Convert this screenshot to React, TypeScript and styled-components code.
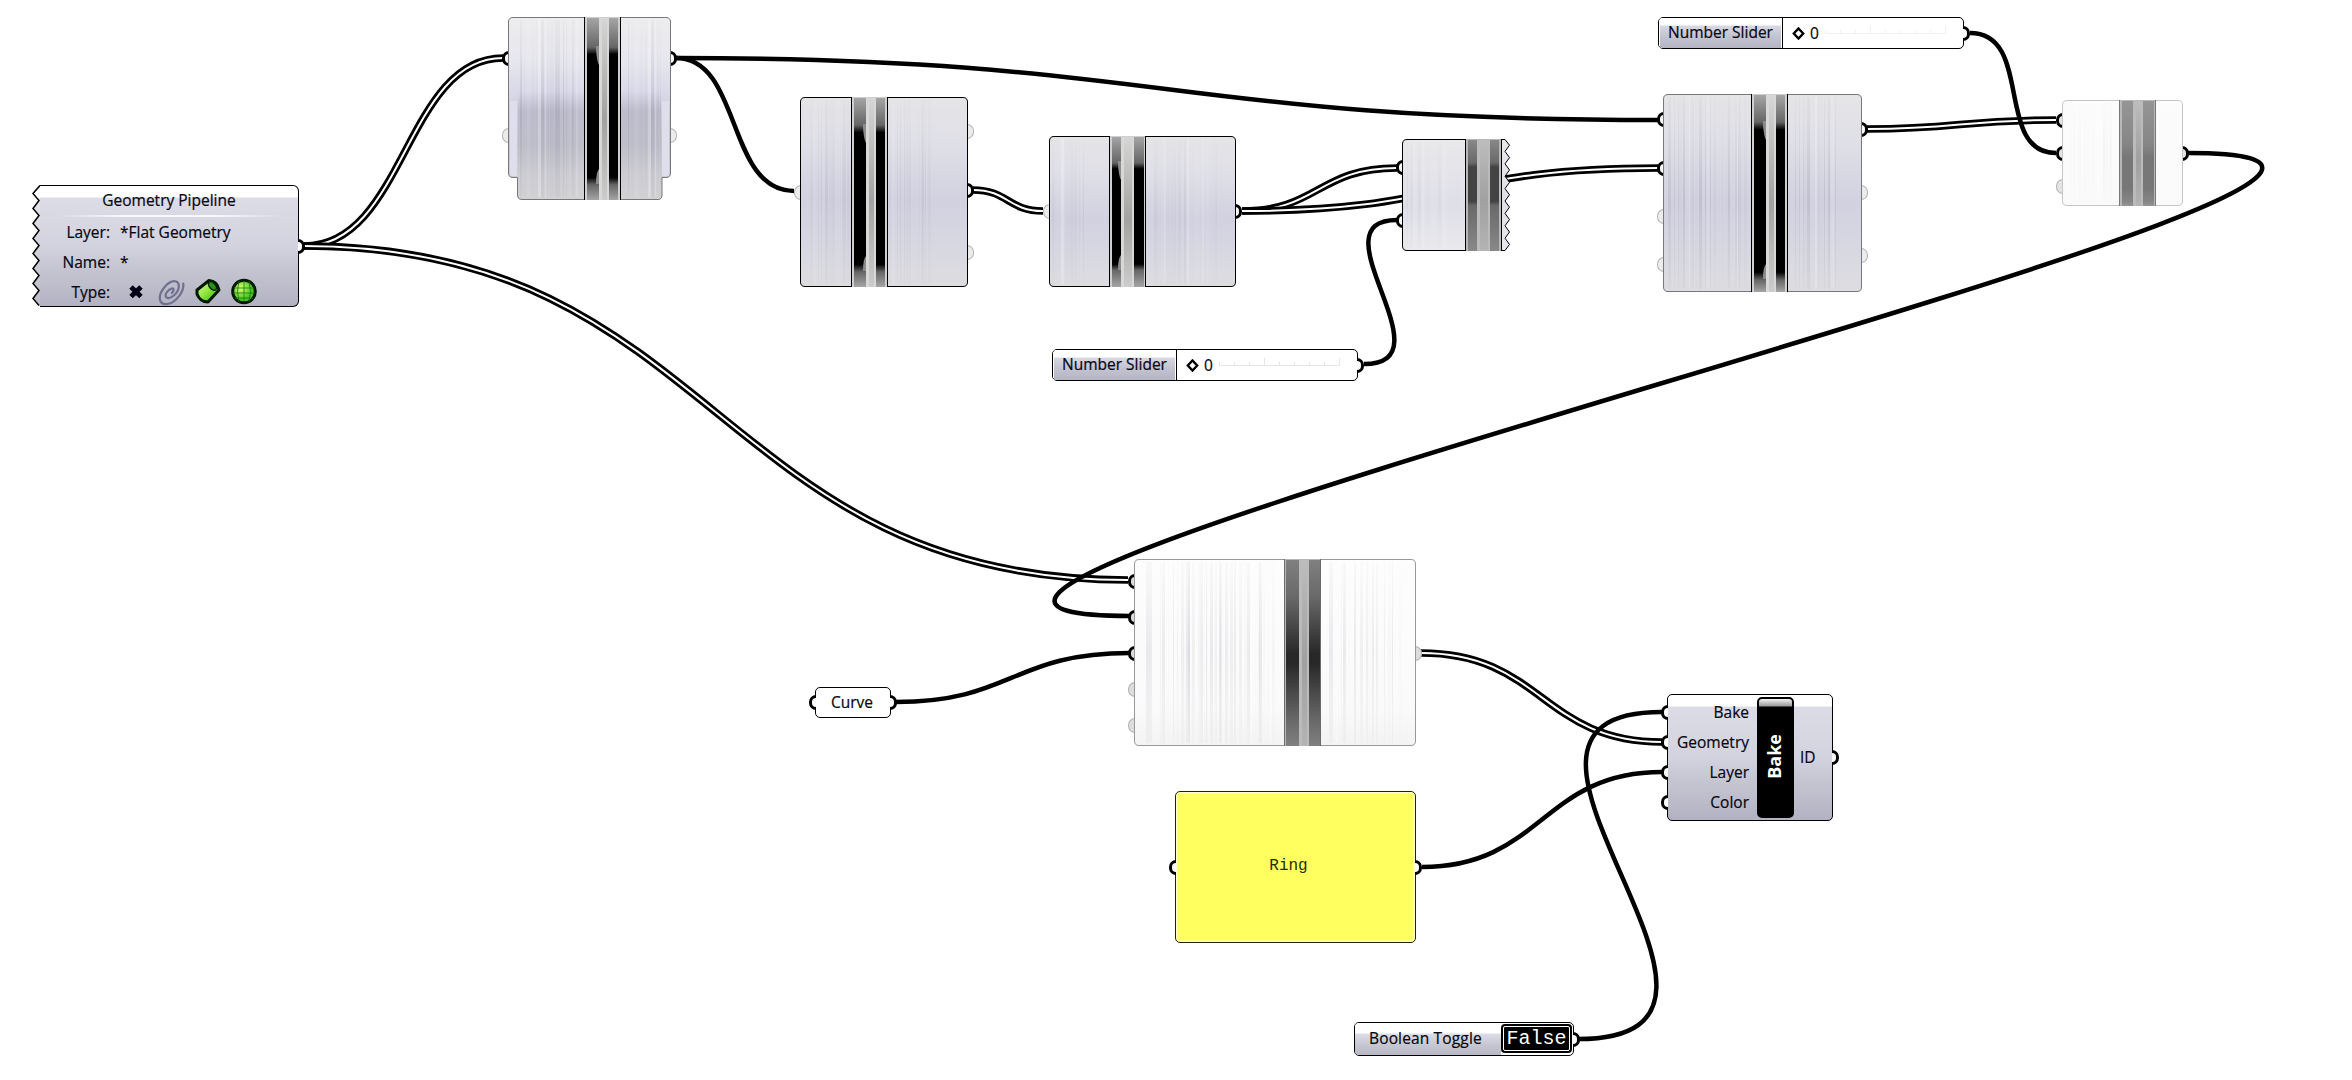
import { ReactNode } from "react";
import styled, { createGlobalStyle } from "styled-components";

const GlobalStyle = createGlobalStyle`
  * {
    box-sizing: border-box;
  }
  body {
    margin: 0;
    background: #ffffff;
    overflow: hidden;
  }
`;

const Canvas = styled.main`
  position: relative;
  width: 2352px;
  height: 1080px;
  overflow: hidden;
  background: #ffffff;
  color: #06060f;
  font-family: "Open Sans", "Noto Sans", sans-serif;
  font-size: 15.5px;
  line-height: 30px;
  -webkit-text-stroke: 0.2px #06060f;
  white-space: nowrap;
`;

const Wires = styled.svg`
  position: absolute;
  inset: 0;
`;

interface IBox {
  $x: number;
  $y: number;
  $w: number;
  $h: number;
}

const Placed = styled.div<IBox>`
  position: absolute;
  left: ${props => props.$x}px;
  top: ${props => props.$y}px;
  width: ${props => props.$w}px;
  height: ${props => props.$h}px;
`;

const Port = styled.span<{ $side: "left" | "right"; $at: number; $ghost?: boolean; $fill?: string }>`
  position: absolute;
  ${props => props.$side}: -6px;
  top: ${props => props.$at - 7.5}px;
  width: 7px;
  height: 15px;
  background: ${props => props.$fill ?? (props.$ghost ? "#ececec" : "#fafafa")};
  border: ${props => props.$ghost ? "1px solid #b4b4b4" : "3px solid #000"};
  border-radius: ${props => props.$side === "left" ? "8px 0 0 8px" : "0 8px 8px 0"};
  border-${props => props.$side === "left" ? "right" : "left"}: none;
`;

const Capsule = styled.div`
  display: flex;
  width: 100%;
  height: 100%;
  border: 1.5px solid #000;
  border-radius: 5px;
  overflow: hidden;
  background: #fff;
`;

const silver = "linear-gradient(#fff 0 11px, #dcdce7 12px, #d3d3df 50%, #c8c8d4 65%, #b2b2c2 100%)";

/* Geometry pipeline */

const PipelineNode = styled(Placed)`
  display: flex;
`;

const PipelineBody = styled.div`
  display: flex;
  flex-direction: column;
  flex: 1;
  border: 1px solid #000;
  border-bottom-width: 1.5px;
  border-right-width: 1.5px;
  border-left: none;
  border-radius: 0 6px 6px 0;
  background: ${silver};
`;

const PipelineTitle = styled.div`
  height: 29px;
  line-height: 29px;
  text-align: center;
`;

const Rule = styled.div`
  height: 2px;
  margin: 0 16px;
  background: linear-gradient(90deg, transparent, #f8f8ff 30%, #f8f8ff 70%, transparent);
`;

const Fields = styled.dl`
  display: grid;
  grid-template-columns: 70px 1fr;
  grid-template-rows: 30px 30px 29px;
  column-gap: 10px;
  margin: 0;
  line-height: 30px;
  dt {
    text-align: right;
  }
  dd {
    margin: 0;
  }
  svg {
    display: block;
    margin-left: 1px;
  }
`;

/* Slider, toggle, panel, bake */

const SliderLabel = styled.div`
  width: 124px;
  border-right: 1.5px solid #000;
  padding: 0 1px;
  background: linear-gradient(#fff 0 7px, #d8d8e3 8px, #c4c4d1 60%, #b4b4c3) content-box, #fff;
  text-align: center;
  line-height: 28px;
`;

const SliderTrack = styled.div`
  display: flex;
  align-items: center;
  flex: 1;
  padding-left: 9px;
  gap: 5px;
  line-height: 29px;
`;

const ToggleLabel = styled.div`
  flex: 1;
  padding-left: 14px;
  background: linear-gradient(#fff 0 10px, #dcdce7 11px, #c6c6d2 70%, #b8b8c5);
  letter-spacing: 0.15px;
  line-height: 31px;
`;

const ToggleValue = styled.div`
  width: 71px;
  margin: 1px 1px 2px 0;
  padding-top: 1px;
  outline: 1.5px solid #fff;
  outline-offset: -3px;
  border-radius: 4px;
  background: #000;
  color: #fff;
  font: 20px/27px "Liberation Mono", monospace;
  text-align: center;
  -webkit-text-stroke: 0;
`;

const PanelBody = styled(Capsule)`
  align-items: center;
  justify-content: center;
  padding: 0 14px 2px 0;
  border-color: #222200;
  background: #ffff60;
  box-shadow: inset 0 0 0 1.5px #ffffc8;
  color: #2b2b00;
  font: 16px "Liberation Mono", monospace;
  -webkit-text-stroke: 0;
`;

const BakeBody = styled(Capsule)`
  background: ${silver};
`;

const BakeInputs = styled.div`
  display: flex;
  flex-direction: column;
  width: 81px;
  padding-top: 2px;
  text-align: right;
`;

const BakeTitle = styled.div`
  display: flex;
  align-items: center;
  justify-content: center;
  width: 37px;
  height: 121px;
  margin: 2px 0 0 8px;
  padding: 0 3px 3px 0;
  border: 2px solid #000;
  border-radius: 5px;
  background: linear-gradient(#f4f4f4, #9a9a9a 7px, #000 8px);
  color: #fff;
  font-size: 18px;
  font-weight: 700;
  -webkit-text-stroke: 0;
  span {
    writing-mode: vertical-rl;
    rotate: 180deg;
  }
`;

const BakeOutput = styled.div`
  display: flex;
  align-items: center;
  padding: 0 0 1px 6px;
`;

const CurveBody = styled(Capsule)`
  align-items: center;
  justify-content: center;
  padding: 0 2px 2px 0;
`;

const SmearSvg = styled.svg`
  position: relative;
  display: block;
  width: 100%;
  height: 100%;
  overflow: visible;
`;

type Streak = [number, number];

interface ISmear {
  id: string;
  w: number;
  h: number;
  fill: [number, string][];
  border: string;
  streaks: Streak[];
  seed: number;
  band: number;
  bars: [number, number, number, number];
  dark: [number, number];
  tone?: [string, string, string];
  edge?: string;
  blend?: number;
  strength?: number;
  jagged?: boolean;
  foot?: boolean;
}

function noise(seed: number, i: number) {
  const v = Math.sin(seed * 12.99 + i * 78.23) * 43758.54;
  return v - Math.floor(v);
}

// A component whose face is smeared vertically, with the two dark bars of its icon.
function Smear({ id, w, h, fill, border, streaks, seed, band, bars, dark, tone = ["#a5a5a5", "#666666", "#000000"], edge = "#000", blend = 0.02, strength = 0.1, jagged, foot }: ISmear) {
  const lines: ReactNode[] = [];
  streaks.forEach(([from, to], s) => {
    for (let x = from, i = 0; x < to; i++) {
      const wide = 1 + Math.floor(noise(seed + s, i) * 3);
      const light = noise(seed, i + 50) > 0.7;
      lines.push(
        <rect
          key={`${s}-${i}`}
          x={x}
          y={3}
          width={wide}
          height={h - 6}
          fill={light ? "#fff" : `url(#${id}-streak)`}
          opacity={noise(seed + 3, i) * (light ? 0.25 : 1)}
        />
      );
      x += wide + Math.floor(noise(seed, i + 9) * 4);
    }
  });
  let outline = `M5 .5H${w - 5}Q${w - 0.5} .5 ${w - 0.5} 5V${h - 5}Q${w - 0.5} ${h - 0.5} ${w - 5} ${h - 0.5}H5Q.5 ${h - 0.5} .5 ${h - 5}V5Q.5 .5 5 .5Z`;
  if (jagged) {
    const teeth = Array.from({ length: 9 }, (_, i) => `L${w - 0.5} ${i * 12.4 + 6.2}L${w - 5} ${Math.min(i * 12.4 + 12.4, h - 0.5)}`).join("");
    outline = `M5 .5H${w - 5}${teeth}H5Q.5 ${h - 0.5} .5 ${h - 5}V5Q.5 .5 5 .5Z`;
  }
  if (foot) {
    outline = `M5 .5H${w - 5}Q${w - 0.5} .5 ${w - 0.5} 5V156Q${w - 0.5} 160.5 ${w - 5} 160.5H${w - 9}V${h - 5}Q${w - 9} ${h - 0.5} ${w - 13} ${h - 0.5}H14Q9.5 ${h - 0.5} 9.5 ${h - 5}V160.5H5Q.5 160.5 .5 156V5Q.5 .5 5 .5Z`;
  }
  const [a, b, c, d] = bars;
  const top = dark[0] / h;
  const bottom = dark[1] / h;
  const black = tone[2] === "#000000";
  return (
    <SmearSvg viewBox={`0 0 ${w} ${h}`}>
      <defs>
        <linearGradient id={`${id}-fill`} x2="0" y2="1">
          {fill.map(([at, color]) => <stop key={at} offset={at} stopColor={color} />)}
        </linearGradient>
        <linearGradient id={`${id}-streak`} x2="0" y2="1">
          <stop offset="0" stopColor="#44445c" stopOpacity={strength * 0.4} />
          <stop offset=".5" stopColor="#44445c" stopOpacity={strength * 1.5} />
          <stop offset="1" stopColor="#44445c" stopOpacity={strength * 0.5} />
        </linearGradient>
        <linearGradient id={`${id}-bar`} x2="0" y2="1">
          <stop offset="0" stopColor={tone[0]} />
          <stop offset={top - blend} stopColor={tone[1]} />
          <stop offset={top + blend} stopColor={tone[2]} />
          <stop offset={bottom - blend} stopColor={tone[2]} />
          <stop offset={bottom + blend} stopColor={tone[1]} />
          <stop offset="1" stopColor={tone[0]} />
        </linearGradient>
        <linearGradient id={`${id}-mid`} x2="0" y2="1">
          <stop offset="0" stopColor={black ? "#d6d6d6" : "#bdbdbd"} />
          <stop offset=".55" stopColor={black ? "#a2a2a0" : "#a0a0a0"} />
          <stop offset="1" stopColor={black ? "#cccccc" : "#b4b4b4"} />
        </linearGradient>
        <linearGradient id={`${id}-shade`} x2="0" y2="1">
          <stop offset="0" stopColor="#8f8fa6" stopOpacity="0" />
          <stop offset=".25" stopColor="#8f8fa6" stopOpacity=".28" />
          <stop offset="1" stopColor="#8f8fa6" stopOpacity="0" />
        </linearGradient>
      </defs>
      <path d={outline} fill={`url(#${id}-fill)`} stroke={border} />
      {foot && (
        <>
          <rect x="2" y="84" width="7" height="75" fill="#dedeec" />
          <rect x={w - 9} y="84" width="7" height="75" fill="#dedeec" />
          <rect x="10" y="74" width={w - 20} height="84" fill={`url(#${id}-shade)`} />
        </>
      )}
      {lines}
      <rect x={band} y="0" width="37" height={h} fill={black ? "#cfcfcf" : "#b8b8b8"} />
      <rect x={a} y="1" width={b - a} height={h - 1} fill={`url(#${id}-bar)`} />
      <rect x={b} y="1" width={c - b} height={h - 1} fill={black ? "#d8d8d6" : "#bbbbbb"} />
      <rect x={b + 3} y="1" width={c - b - 5} height={h - 1} fill={`url(#${id}-mid)`} />
      <rect x={c} y="1" width={d - c} height={h - 1} fill={`url(#${id}-bar)`} />
      {black && (
        <>
          <path d={`M${b - 3} ${dark[0] - 4}h3v19q-2 -3 -3 -15Z`} fill="#8c8c8c" />
          <path d={`M${b - 3} ${dark[1] + 3}h3v-15q-3 3 -3 15Z`} fill="#8c8c8c" />
        </>
      )}
      <path d={`M${band + 0.5} 0V${h}M${band + 36.5} 0V${h}`} stroke={edge} />
    </SmearSvg>
  );
}

const lilac: [number, string][] = [[0, "#e5e5e7"], [0.25, "#dfdfe7"], [0.55, "#d1d1e0"], [0.72, "#d6d6e2"], [1, "#dddde0"]];

interface INode {
  x: number;
  y: number;
  smear: ISmear;
  portFill?: string;
  ports: ["left" | "right", number, boolean?][];
}

const nodes: INode[] = [
  {
    x: 508, y: 17,
    smear: {
      id: "n1", w: 163, h: 183, seed: 2, foot: true, border: "#77777c", strength: 0.11,
      fill: [[0, "#ededee"], [0.25, "#e6e6ed"], [0.42, "#d8d8e8"], [0.5, "#cfcfdc"], [0.7, "#c6c6d0"], [1, "#d2d2d4"]],
      streaks: [[12, 70], [120, 153]], band: 76, bars: [79, 91, 101, 110], dark: [33, 164],
    },
    ports: [["left", 41], ["left", 118, true], ["right", 41], ["right", 118, true]],
  },
  {
    x: 800, y: 97,
    smear: {
      id: "n2", w: 168, h: 190, seed: 5, border: "#000", fill: lilac, strength: 0.06,
      streaks: [[10, 48], [90, 135]], band: 51, bars: [54, 66, 76, 85], dark: [31, 171],
    },
    ports: [["left", 95, true], ["right", 34, true], ["right", 93], ["right", 155, true]],
  },
  {
    x: 1049, y: 136,
    smear: {
      id: "n3", w: 187, h: 151, seed: 8, border: "#000", fill: lilac, strength: 0.05,
      streaks: [[3, 35], [105, 170]], band: 60, bars: [63, 72, 85, 95], dark: [29, 131],
    },
    ports: [["left", 75, true], ["right", 75]],
  },
  {
    x: 1402, y: 139,
    smear: {
      id: "n4", w: 108, h: 112, seed: 4, border: "#000", jagged: true, strength: 0.04,
      fill: [[0, "#e9e9eb"], [0.6, "#dfdfe8"], [1, "#e9e9ed"]], tone: ["#888888", "#696969", "#434343"],
      streaks: [[5, 58]], band: 63, bars: [66, 75, 88, 97], dark: [25, 64],
    },
    ports: [["left", 28], ["left", 81]],
  },
  {
    x: 1663, y: 94,
    smear: {
      id: "n6", w: 199, h: 198, seed: 11, border: "#77777c", fill: lilac, strength: 0.09,
      streaks: [[5, 82], [132, 175]], band: 88, bars: [91, 103, 113, 122], dark: [31, 182],
    },
    ports: [["left", 25], ["left", 74], ["left", 122, true], ["left", 170, true], ["right", 35], ["right", 98, true], ["right", 161, true]],
  },
  {
    x: 2062, y: 100,
    smear: {
      id: "n7", w: 121, h: 106, seed: 3, border: "#c6c6c6", fill: [[0, "#fcfcfc"], [1, "#fafafa"]], strength: 0.04,
      tone: ["#959595", "#868686", "#777777"], edge: "#777", blend: 0.06,
      streaks: [[9, 50]], band: 57, bars: [60, 71, 81, 92], dark: [50, 95],
    },
    portFill: "#e4e4e4",
    ports: [["left", 20], ["left", 53], ["left", 86, true], ["right", 53]],
  },
  {
    x: 1134, y: 559,
    smear: {
      id: "n8", w: 282, h: 187, seed: 14, border: "#999", fill: [[0, "#fdfdfd"], [0.8, "#fafafa"], [1, "#f3f3f3"]], strength: 0.07,
      tone: ["#808080", "#686868", "#282828"], edge: "#6a6a6a", blend: 0.15,
      streaks: [[12, 142], [52, 142], [195, 268]], band: 150, bars: [152, 165, 175, 186], dark: [66, 132],
    },
    portFill: "#dcdcdc",
    ports: [["left", 22], ["left", 58], ["left", 94], ["left", 130, true], ["left", 166, true], ["right", 94, true]],
  },
];

const doubleWires = [
  "M304 246C405 246 405 58 503 58",
  "M304 246C717 246 717 580 1128 580",
  "M973 190C1008 190 1008 211 1043 211",
  "M1242 211C1318 211 1318 168 1397 168",
  "M1242 211C1450 211 1450 168 1658 168",
  "M1867 129C1960 129 1960 120 2056 120",
  "M1421 653C1542 653 1542 742 1662 742",
];

const singleWires = [
  "M676 58C742 58 726 191 794 191",
  "M676 58C1166 58 1166 120 1658 120",
  "M1364 364C1452 364 1312 220 1397 220",
  "M1970 33C2034 33 1994 153 2056 153",
  "M2188 153C2668 153 646 616 1130 616",
  "M896 702C1012 702 1012 653 1130 653",
  "M1422 867C1542 867 1542 772 1662 772",
  "M1578 1039C1808 1039 1436 712 1662 712",
];

function TypeIcons() {
  return (
    <svg width="144" height="29" viewBox="0 0 144 29">
      <defs>
        <linearGradient id="green" x2="1" y2="1">
          <stop offset="0" stopColor="#e8ffa8" />
          <stop offset=".5" stopColor="#8be43c" />
          <stop offset="1" stopColor="#27a800" />
        </linearGradient>
        <radialGradient id="ball" cx=".35" cy=".35">
          <stop offset="0" stopColor="#d8ff70" />
          <stop offset="1" stopColor="#4cc424" />
        </radialGradient>
      </defs>
      <path d="M10 10l10 9.500M20 10l-10 9.500" stroke="#000014" strokeWidth="5" />
      {/* curve: a flattened spiral lying on the diagonal */}
      <g fill="none" stroke="#70708f" strokeWidth="2.200" transform="translate(50 15) rotate(-45)">
        <path d="M15 2C11 9 -4 11 -11 6S-13 -7 -1 -8 14 -2 9 2 -6 5 -7 1 0 -4 3 -2 1 2 -1 1" />
      </g>
      <path d="M76 13L88 3.500Q96 4 98 13L87 25Q79 25 76 17Z" fill="url(#green)" stroke="#001800" strokeWidth="3" strokeLinejoin="round" />
      <ellipse cx="91.500" cy="9" rx="3" ry="5" transform="rotate(-42 91.500 9)" fill="#279318" stroke="#002200" strokeWidth="1.500" />
      <circle cx="123" cy="14.500" r="11.300" fill="url(#ball)" stroke="#001800" strokeWidth="3" />
      <path d="M113 11h20M112 16h22M114 21h18M118 4q-3 10 0 21M123 4v21M128 4q3 10 0 21" fill="none" stroke="#167b0b" strokeWidth=".8" />
    </svg>
  );
}

function NumberSlider({ x, y, ticks }: { x: number; y: number; ticks: string }) {
  return (
    <Placed $x={x} $y={y} $w={306} $h={32}>
      <Port $side="right" $at={16} />
      <Capsule>
        <SliderLabel>Number Slider</SliderLabel>
        <SliderTrack>
          <svg width="13" height="13" viewBox="0 0 13 13">
            <path d="M6.500 1.500l4.700 5-4.700 5-4.700-5Z" fill="#fff" stroke="#000" strokeWidth="2.400" />
          </svg>
          0
          <svg width="124" height="20" viewBox="0 0 124 20" fill="none" stroke={ticks}>
            <path d="M1 10.500h121M1.500 7v3M16.500 7v3M31.500 7v3M46.500 3v7M61.500 7v3M76.500 7v3M91.500 7v3M106.500 7v3M121.500 3v7" />
          </svg>
        </SliderTrack>
      </Capsule>
    </Placed>
  );
}

function App() {
  const teeth = Array.from({ length: 8 }, (_, i) => `L1 ${i * 15 + 8.5}L7 ${i * 15 + 15.5}`).join("");
  return (
    <>
      <GlobalStyle />
      <Canvas>
        <Wires width="2352" height="1080" viewBox="0 0 2352 1080" fill="none">
          {doubleWires.map(d => (
            <g key={d}>
              <path d={d} stroke="#000" strokeWidth="7.500" />
              <path d={d} stroke="#fff" strokeWidth="2" />
            </g>
          ))}
          {singleWires.map(d => <path key={d} d={d} stroke="#000" strokeWidth="4.500" />)}
        </Wires>

        <PipelineNode $x={32} $y={185} $w={267} $h={122}>
          <Port $side="right" $at={61} />
          <svg width="8" height="122" viewBox="0 0 8 122">
            <defs>
              <linearGradient id="edge" x2="0" y2="1">
                <stop offset="0" stopColor="#fff" />
                <stop offset=".1" stopColor="#fff" />
                <stop offset=".11" stopColor="#e4e4ec" />
                <stop offset="1" stopColor="#bcbcca" />
              </linearGradient>
            </defs>
            <path d={`M8 .5${teeth}L8 121Z`} fill="url(#edge)" />
            <path d={`M8 .5${teeth}`} fill="none" stroke="#000" strokeWidth="1.500" />
          </svg>
          <PipelineBody>
            <PipelineTitle>Geometry Pipeline</PipelineTitle>
            <Rule />
            <Fields>
              <dt>Layer:</dt>
              <dd>*Flat Geometry</dd>
              <dt>Name:</dt>
              <dd>*</dd>
              <dt>Type:</dt>
              <dd><TypeIcons /></dd>
            </Fields>
          </PipelineBody>
        </PipelineNode>

        {nodes.map(({ x, y, smear, ports, portFill }) => (
          <Placed key={smear.id} $x={x} $y={y} $w={smear.w} $h={smear.h}>
            {ports.map(([side, at, ghost]) => <Port key={side + at} $side={side} $at={at} $ghost={ghost} $fill={portFill} />)}
            <Smear {...smear} />
          </Placed>
        ))}

        <NumberSlider x={1658} y={17} ticks="#f0f0f0" />
        <NumberSlider x={1052} y={349} ticks="#e6e6e6" />

        <Placed $x={815} $y={687} $w={76} $h={31}>
          <Port $side="left" $at={15} />
          <Port $side="right" $at={15} />
          <CurveBody>Curve</CurveBody>
        </Placed>

        <Placed $x={1175} $y={791} $w={241} $h={152}>
          <Port $side="left" $at={76} />
          <Port $side="right" $at={76} />
          <PanelBody>Ring</PanelBody>
        </Placed>

        <Placed $x={1667} $y={694} $w={166} $h={127}>
          <Port $side="left" $at={18} />
          <Port $side="left" $at={48} />
          <Port $side="left" $at={78} />
          <Port $side="left" $at={108} />
          <Port $side="right" $at={63} />
          <BakeBody>
            <BakeInputs>
              <span>Bake</span>
              <span>Geometry</span>
              <span>Layer</span>
              <span>Color</span>
            </BakeInputs>
            <BakeTitle><span>Bake</span></BakeTitle>
            <BakeOutput>ID</BakeOutput>
          </BakeBody>
        </Placed>

        <Placed $x={1354} $y={1022} $w={220} $h={34}>
          <Port $side="right" $at={17} />
          <Capsule>
            <ToggleLabel>Boolean Toggle</ToggleLabel>
            <ToggleValue>False</ToggleValue>
          </Capsule>
        </Placed>
      </Canvas>
    </>
  );
}

export default App;
